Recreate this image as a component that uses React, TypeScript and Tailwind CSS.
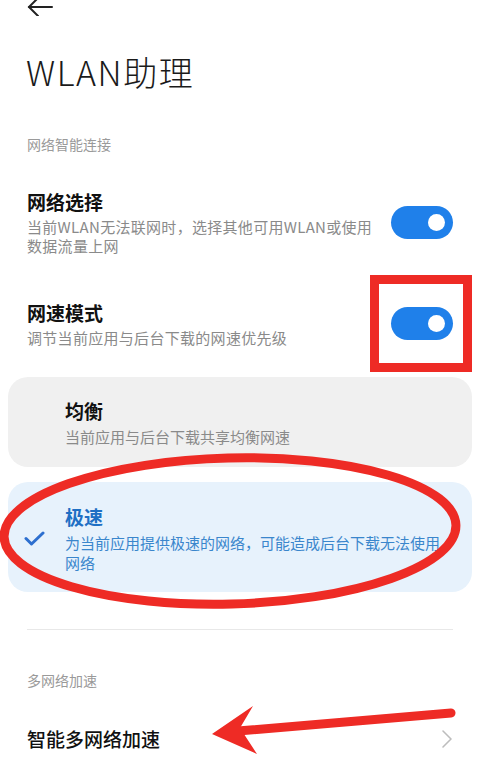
import React from "react";

const font = { fontFamily: '"Noto Sans CJK SC", "Noto Sans", sans-serif' };

function Toggle() {
  return (
    <div className="relative h-[33px] w-[62px] shrink-0 rounded-full bg-[#1f80ea]">
      <div className="absolute right-[8px] top-[8px] h-[17px] w-[17px] rounded-full bg-white" />
    </div>
  );
}

function SwitchRow({ title, sub }: { title: string; sub: string[] }) {
  return (
    <div className="flex items-center justify-between px-[27px]">
      <div className="w-[352px]">
        <div className="text-[19px] font-semibold leading-[26px] text-[#111]">{title}</div>
        <div className="mt-[2px] text-[15px] leading-[19px] tracking-[0.3px] text-[#8a8a8a]">
          {sub.map((s) => (
            <div key={s}>{s}</div>
          ))}
        </div>
      </div>
      <Toggle />
    </div>
  );
}

function Annotations() {
  return (
    <svg
      className="pointer-events-none absolute left-0 top-0"
      width="480"
      height="761"
      viewBox="0 0 480 761"
      fill="none"
    >
      <rect x="374.5" y="279.5" width="93" height="88" stroke="#ee2b25" strokeWidth="9" />
      <ellipse
        cx="230"
        cy="531"
        rx="226"
        ry="73"
        stroke="#ee2b25"
        strokeWidth="9"
        transform="rotate(-1.5 230 531)"
      />
      <line x1="238" y1="731" x2="451" y2="713" stroke="#ee2b25" strokeWidth="9" strokeLinecap="round" />
      <polygon points="212,734 253,706 240,728 257,754" fill="#ee2b25" />
    </svg>
  );
}

export default function App() {
  return (
    <div className="relative h-[761px] w-[480px] overflow-hidden bg-white" style={font}>
      <div className="h-[16px] pl-[27px]">
        <svg width="27" height="16" viewBox="0 0 27 16" fill="none" stroke="#222" strokeWidth="2" strokeLinecap="round">
          <line x1="2" y1="7" x2="25" y2="7" />
          <polyline points="11,-2 2,7 11,16" />
        </svg>
      </div>

      <div className="mt-[35px] px-[26px] text-[34px] font-light leading-[42px] tracking-[1.5px] text-[#1a1a1a]">WLAN助理</div>

      <div className="mt-[41px] px-[27px] text-[14px] leading-[20px] text-[#9a9a9a]">网络智能连接</div>

      <div className="mt-[35px]">
        <SwitchRow title="网络选择" sub={["当前WLAN无法联网时，选择其他可用WLAN或使用", "数据流量上网"]} />
      </div>

      <div className="mt-[45px]">
        <SwitchRow title="网速模式" sub={["调节当前应用与后台下载的网速优先级"]} />
      </div>

      <div className="mx-[8px] mt-[30px] rounded-[20px] bg-[#f0f0f0] pb-[21px] pl-[57px] pt-[21px]">
        <div className="text-[19px] font-semibold leading-[26px] text-[#111]">均衡</div>
        <div className="mt-[3px] text-[15px] leading-[19px] text-[#8a8a8a]">当前应用与后台下载共享均衡网速</div>
      </div>

      <div className="mx-[8px] mt-[15px] flex items-center rounded-[20px] bg-[#e7f2fc] pb-[19px] pt-[22px]">
        <div className="flex w-[57px] shrink-0 justify-center pr-[4px]">
          <svg width="21" height="15" viewBox="0 0 21 15" fill="none" stroke="#2d6fcf" strokeWidth="3" strokeLinecap="round" strokeLinejoin="round">
            <polyline points="2,7.5 7.5,13 19,2" />
          </svg>
        </div>
        <div>
          <div className="text-[19px] font-semibold leading-[26px] text-[#1e6fc4]">极速</div>
          <div className="mt-[3px] text-[15px] leading-[20px] text-[#3a86cc]">
            <div>为当前应用提供极速的网络，可能造成后台下载无法使用</div>
            <div>网络</div>
          </div>
        </div>
      </div>

      <div className="mx-[27px] mt-[37px] h-px bg-[#e8e8e8]" />

      <div className="mt-[40px] px-[27px] text-[14px] leading-[20px] text-[#9a9a9a]">多网络加速</div>

      <div className="mt-[36px] flex items-center justify-between px-[27px]">
        <div className="text-[19px] font-medium leading-[26px] text-[#111]">智能多网络加速</div>
        <svg width="12" height="20" viewBox="0 0 12 20" fill="none" stroke="#bdbdbd" strokeWidth="1.6" strokeLinecap="round" strokeLinejoin="round">
          <polyline points="2,2 10,10 2,18" />
        </svg>
      </div>

      <Annotations />
    </div>
  );
}
